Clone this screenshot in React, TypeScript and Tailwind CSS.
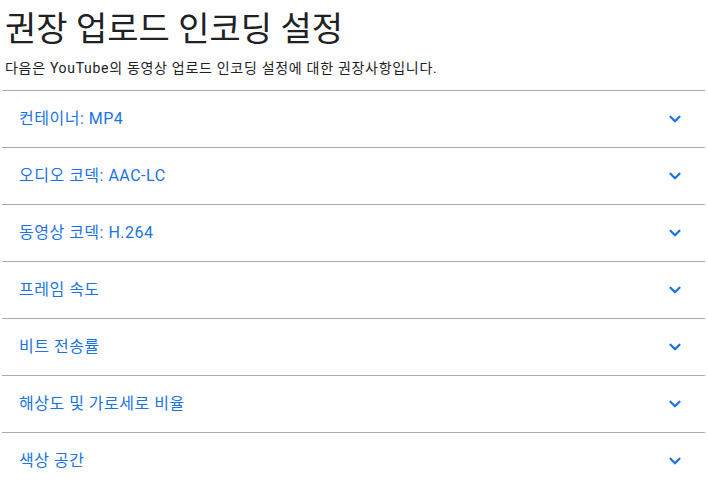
import { ChevronDown } from 'lucide-react';

const ROWS = [
  '컨테이너: MP4',
  '오디오 코덱: AAC-LC',
  '동영상 코덱: H.264',
  '프레임 속도',
  '비트 전송률',
  '해상도 및 가로세로 비율',
  '색상 공간',
];

export default function App() {
  return (
    <div
      className="w-[708px] h-[489px] overflow-hidden bg-white pl-[2px] pr-[3px] text-[#202124]"
      style={{ fontFamily: "Roboto, 'Noto Sans CJK KR', sans-serif" }}
    >
      {/* Header */}
      <div className="pl-[3px] pt-[7px]">
        <h1 className="text-[34px] leading-[44px] font-normal">권장 업로드 인코딩 설정</h1>
        <p className="text-[14px] leading-[20px] tracking-[0.7px] mt-[7px] mb-[12px]">
          다음은 YouTube의 동영상 업로드 인코딩 설정에 대한 권장사항입니다.
        </p>
      </div>

      {/* Accordion */}
      <div className="border-t border-[#ababab]">
        {ROWS.map((label) => (
          <div
            key={label}
            className="h-[57px] border-b border-[#ababab] flex items-center justify-between pl-[17px] pr-[21px] cursor-pointer"
          >
            <span className="text-[16px] tracking-[0.5px] text-[#1a73e8]">{label}</span>
            <ChevronDown className="w-[18px] h-[18px] text-[#1a73e8]" strokeWidth={3} />
          </div>
        ))}
      </div>
    </div>
  );
}
